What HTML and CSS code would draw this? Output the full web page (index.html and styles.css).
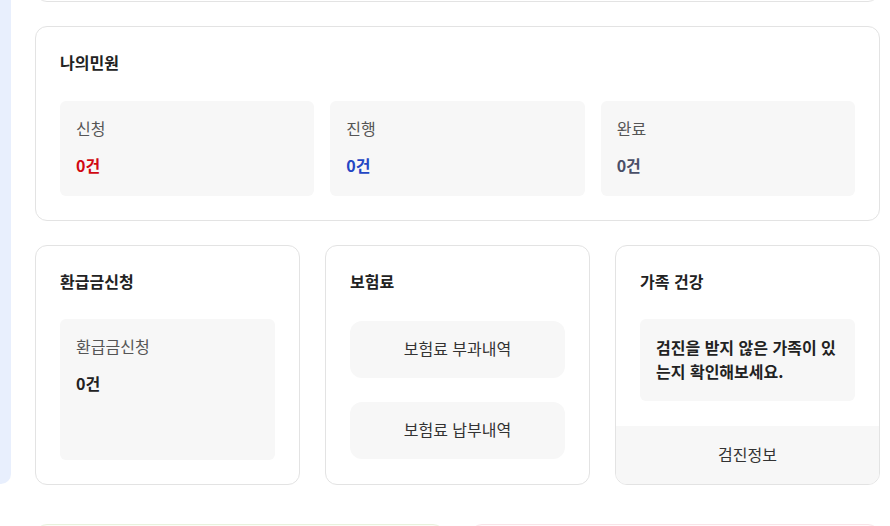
FILE: index.html
```html
<!DOCTYPE html>
<html lang="ko">
<head>
<meta charset="utf-8">
<title>마이페이지</title>
<link rel="stylesheet" href="styles.css">
</head>
<body>
<div class="page">
  <aside class="sidebar"></aside>
  <main class="content">
    <section class="card card-prev"></section>

    <section class="card minwon">
      <h2 class="card-title">나의민원</h2>
      <div class="stat-grid">
        <div class="stat">
          <p class="stat-label">신청</p>
          <p class="stat-value red">0건</p>
        </div>
        <div class="stat">
          <p class="stat-label">진행</p>
          <p class="stat-value blue">0건</p>
        </div>
        <div class="stat">
          <p class="stat-label">완료</p>
          <p class="stat-value gray">0건</p>
        </div>
      </div>
    </section>

    <div class="row3">
      <section class="card col-card">
        <h2 class="card-title">환급금신청</h2>
        <div class="stat stat-fill">
          <p class="stat-label">환급금신청</p>
          <p class="stat-value dark">0건</p>
        </div>
      </section>

      <section class="card col-card">
        <h2 class="card-title">보험료</h2>
        <div class="btn-list">
          <button class="soft-btn" type="button">보험료 부과내역</button>
          <button class="soft-btn" type="button">보험료 납부내역</button>
        </div>
      </section>

      <section class="card family-card">
        <div class="family-body">
          <h2 class="card-title">가족 건강</h2>
          <div class="notice">검진을 받지 않은 가족이 있는지 확인해보세요.</div>
        </div>
        <div class="card-footer">검진정보</div>
      </section>
    </div>

    <div class="row2">
      <section class="card tint-green"></section>
      <section class="card tint-pink"></section>
    </div>
  </main>
</div>
</body>
</html>
```
FILE: styles.css
```css
* { box-sizing: border-box; }

html, body {
  margin: 0;
  padding: 0;
  background: #ffffff;
  overflow: hidden;
}

body {
  font-family: "Noto Sans CJK KR", "Noto Sans", sans-serif;
  color: #222222;
  width: 890px;
  height: 526px;
}

.page {
  display: flex;
  align-items: flex-start;
  height: 526px;
  overflow: hidden;
}

.sidebar {
  width: 11px;
  height: 484px;
  flex: 0 0 11px;
  background: #e8effd;
  border-bottom-right-radius: 10px;
}

.content {
  width: 845px;
  margin-left: 24px;
  display: flex;
  flex-direction: column;
}

.card {
  background: #ffffff;
  border: 1px solid #e3e3e3;
  border-radius: 12px;
}

.card-prev {
  height: 41px;
  margin-top: -39px;
}

.minwon {
  margin-top: 24px;
  padding: 22px 24px 24px;
}

.card-title {
  margin: 0;
  font-size: 16px;
  font-weight: 700;
  line-height: 26px;
  color: #222222;
}

.stat-grid {
  margin-top: 26px;
  display: grid;
  grid-template-columns: repeat(3, 1fr);
  gap: 16px;
}

.stat {
  background: #f7f7f7;
  border-radius: 6px;
  padding: 15px 16px 18px;
}

.stat p { margin: 0; }

.stat-label {
  font-size: 16px;
  line-height: 24px;
  color: #555555;
}

.stat-value {
  margin-top: 12px !important;
  font-size: 16px;
  font-weight: 700;
  line-height: 26px;
}

.red { color: #d10a12; }
.blue { color: #2446c4; }
.gray { color: #4a4f68; }
.dark { color: #222222; }

.row3 {
  margin-top: 24px;
  display: grid;
  grid-template-columns: repeat(3, 1fr);
  gap: 25px;
  height: 240px;
}

.col-card {
  padding: 22px 24px 24px;
  display: flex;
  flex-direction: column;
}

.stat-fill {
  margin-top: 25px;
  flex: 1;
}

.btn-list {
  margin-top: 27px;
  display: flex;
  flex-direction: column;
  gap: 24px;
}

.soft-btn {
  height: 57px;
  border: none;
  border-radius: 12px;
  background: #f7f7f7;
  font-family: inherit;
  font-size: 16px;
  color: #333333;
  padding: 0 0 3px;
}

.family-card {
  display: flex;
  flex-direction: column;
  overflow: hidden;
}

.family-body {
  padding: 22px 24px 0;
}

.notice {
  margin-top: 25px;
  background: #f7f7f7;
  border-radius: 6px;
  padding: 16px 16px 18px;
  font-size: 16px;
  font-weight: 700;
  line-height: 24px;
  color: #222222;
}

.card-footer {
  margin-top: auto;
  height: 58px;
  padding-bottom: 3px;
  background: #f7f7f7;
  display: flex;
  align-items: center;
  justify-content: center;
  font-size: 16px;
  color: #333333;
}

.row2 {
  margin-top: 39px;
  display: grid;
  grid-template-columns: repeat(2, 1fr);
  gap: 25px;
}

.row2 .card {
  height: 120px;
}

.tint-green {
  border-color: #e8f1dc;
  background: #fbfdf8;
}

.tint-pink {
  border-color: #f8e3e7;
  background: #fffafb;
}
```
